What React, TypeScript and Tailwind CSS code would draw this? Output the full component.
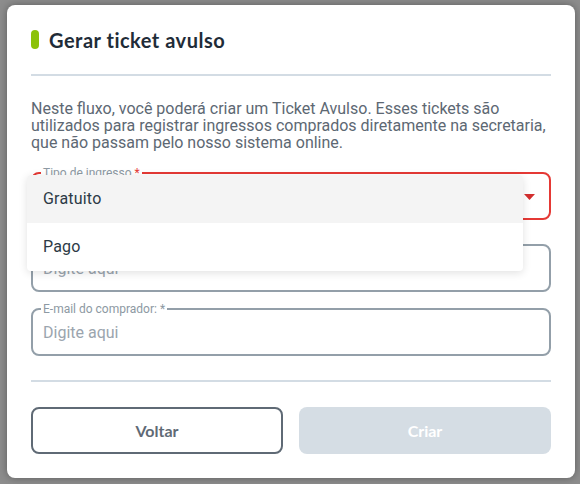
import React from "react";

function Field({
  label,
  error,
  children,
}: {
  label: React.ReactNode;
  error?: boolean;
  children: React.ReactNode;
}) {
  return (
    <fieldset
      className={
        "h-[54px] rounded-[8px] border-2 px-[10px] pb-0 m-0 " +
        (error ? "border-[#e53935]" : "border-[#939fa9]")
      }
    >
      <legend className="ml-[-2px] px-[2px] text-[12px] leading-[14px] text-[#8d99a3]">
        {label}
      </legend>
      {children}
    </fieldset>
  );
}

export default function App() {
  return (
    <div
      className="relative h-[484px] w-[580px] overflow-hidden bg-[#8d8d8d] pt-[5px] pl-[7px]"
      style={{ fontFamily: "Roboto, 'Liberation Sans', sans-serif" }}
    >
      <div className="relative h-[473px] w-[568px] rounded-[8px] bg-white px-[24px] pt-[25px] shadow-[0_0_8px_rgba(0,0,0,0.35)]">
        <div className="flex h-[19px] items-center gap-[10px]">
          <span className="h-[19px] w-[8px] rounded-full bg-[#8cc20a]" />
          <h1
            className="text-[20px] font-bold leading-none tracking-[0.5px] text-[#1f2c38]"
            style={{ fontFamily: "Lato, 'Open Sans', sans-serif" }}
          >
            Gerar ticket avulso
          </h1>
        </div>
        <div className="mt-[25px] h-[2px] w-[520px] bg-[#d3dce4]" />
        <p className="mt-[24px] w-[526px] text-[16px] leading-[17px] text-[#5d6873]">
          Neste fluxo, você poderá criar um Ticket Avulso. Esses tickets são
          utilizados para registrar ingressos comprados diretamente na
          secretaria, que não passam pelo nosso sistema online.
        </p>

        <div className="mt-[15px] flex w-[520px] flex-col">
          <Field
            error
            label={
              <>
                Tipo de ingresso <span className="text-[#e53935]">*</span>
              </>
            }
          >
            <div className="flex h-[34px] items-center justify-end pr-[4px]">
              <svg width="11" height="6" viewBox="0 0 11 6">
                <path d="M0 0h11L5.5 6z" fill="#d32f2f" />
              </svg>
            </div>
          </Field>
          <div className="mt-[18px]">
            <Field label="Nome do comprador: *">
              <div className="flex h-[34px] items-center text-[16px] text-[#9ba5ae]">
                Digite aqui
              </div>
            </Field>
          </div>
          <div className="mt-[10px]">
            <Field label="E-mail do comprador: *">
              <div className="flex h-[34px] items-center text-[16px] text-[#9ba5ae]">
                Digite aqui
              </div>
            </Field>
          </div>
        </div>

        <div className="mt-[24px] h-[2px] w-[520px] bg-[#d3dce4]" />

        <div className="mt-[25px] flex w-[520px] gap-[16px]">
          <button
            className="flex h-[47px] w-[252px] items-center justify-center rounded-[8px] border-2 border-[#5f6a75] text-[16px] font-bold text-[#5f6a75]"
            style={{ fontFamily: "Lato, 'Open Sans', sans-serif" }}
          >
            Voltar
          </button>
          <button
            className="flex h-[47px] w-[252px] items-center justify-center rounded-[8px] bg-[#d5dde4] text-[16px] font-bold text-white"
            style={{ fontFamily: "Lato, 'Open Sans', sans-serif" }}
          >
            Criar
          </button>
        </div>

        <div className="absolute left-[20px] top-[170px] w-[496px] overflow-hidden rounded-[4px] bg-white shadow-[0_2px_8px_rgba(0,0,0,0.12)]">
          <div className="flex h-[48px] items-center bg-[#f4f4f4] px-[16px] text-[16px] tracking-[0.2px] text-[#2c3a46]">
            Gratuito
          </div>
          <div className="flex h-[48px] items-center px-[16px] text-[16px] tracking-[0.2px] text-[#2c3a46]">
            Pago
          </div>
        </div>
      </div>
    </div>
  );
}
